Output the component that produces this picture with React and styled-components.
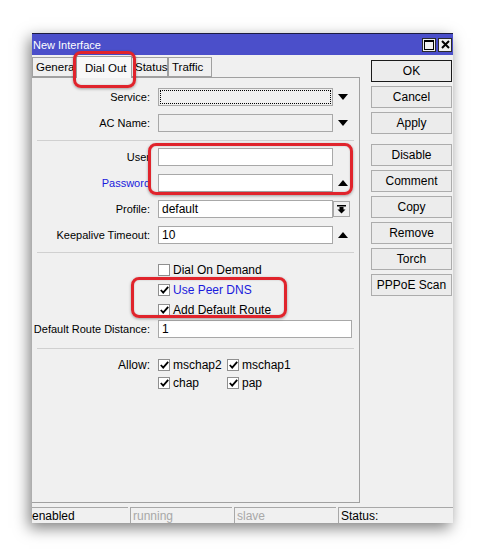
import React from "react";
import styled, { createGlobalStyle } from "styled-components";

const GlobalStyle = createGlobalStyle`
  html, body {
    margin: 0;
    padding: 0;
    background: #ffffff;
  }
  body {
    font-family: "Liberation Sans", Arial, sans-serif;
    font-size: 11px;
    color: #000;
  }
`;

const Page = styled.div`
  width: 485px;
  height: 556px;
  padding: 33px 0 0 32px;
  box-sizing: border-box;
`;

const Window = styled.div`
  position: relative;
  width: 421px;
  height: 490px;
  background: #f0f0f0;
  display: flex;
  flex-direction: column;
  box-shadow: -3px 5px 14px rgba(0, 0, 0, 0.5);
`;

const TitleBar = styled.div`
  height: 22px;
  box-sizing: border-box;
  background: #4b4fca;
  border-top: 1px solid #1c1c40;
  display: flex;
  align-items: center;
  padding: 0 1px 0 1px;
  color: #fff;
`;

const Title = styled.div`
  flex: 1;
  font-size: 11px;
`;

const TitleButton = styled.div`
  width: 14px;
  height: 14px;
  box-sizing: border-box;
  margin-left: 2px;
  border: 1px solid #2a2a2a;
  background: #f0f0f0;
  display: flex;
  align-items: center;
  justify-content: center;
`;

const Body = styled.div`
  flex: 1;
  display: flex;
`;

const LeftColumn = styled.div`
  width: 328px;
  display: flex;
  flex-direction: column;
`;

const TabStrip = styled.div`
  height: 23px;
  display: flex;
  align-items: flex-end;
  border-bottom: 1px solid #a0a0a0;
  box-sizing: border-box;
`;

const Tab = styled.div`
  position: relative;
  height: ${(p) => (p.$active ? "22px" : "20px")};
  margin: ${(p) => (p.$active ? "0 -1px -1px -1px" : "0")};
  padding: 0 ${(p) => (p.$active ? "8px" : "3px")};
  width: ${(p) => p.$w}px;
  box-sizing: border-box;
  border: 1px solid #a0a0a0;
  border-bottom: ${(p) => (p.$active ? "none" : "1px solid #a0a0a0")};
  background: ${(p) => (p.$active ? "#f8f8f8" : "#f0f0f0")};
  display: flex;
  align-items: center;
  white-space: nowrap;
  font-size: 11.5px;
  z-index: ${(p) => (p.$active ? 2 : 1)};
`;

const Panel = styled.div`
  position: relative;
  flex: 1;
  border-right: 1px solid #a0a0a0;
  border-bottom: 1px solid #a0a0a0;
  padding-top: 10px;
  box-sizing: border-box;
`;

const Row = styled.div`
  display: flex;
  align-items: center;
  height: ${(p) => p.$h || 18}px;
  margin-bottom: ${(p) => (p.$mb !== undefined ? p.$mb : 8)}px;
`;

const Label = styled.div`
  width: 118px;
  margin-right: 8px;
  text-align: right;
  white-space: nowrap;
  color: ${(p) => (p.$blue ? "#1a1adc" : "#000")};
`;

const Field = styled.div`
  width: ${(p) => p.$w || 175}px;
  height: 18px;
  box-sizing: border-box;
  border: 1px solid #a8a8a8;
  background: ${(p) => (p.$disabled ? "#f0f0f0" : "#ffffff")};
  padding: 0 3px;
  display: flex;
  align-items: center;
  font-size: 12px;
`;

const FocusRing = styled.div`
  flex: 1;
  height: 12px;
  margin: 0 -2px;
  border: 1px dotted #000;
`;

const Trail = styled.div`
  width: 20px;
  height: 18px;
  display: flex;
  align-items: center;
  justify-content: center;
`;

const SmallButton = styled.div`
  width: 17px;
  height: 16px;
  box-sizing: border-box;
  border: 1px solid #a8a8a8;
  background: #f0f0f0;
  display: flex;
  align-items: center;
  justify-content: center;
`;

const Separator = styled.div`
  margin: 0 5px 7px 5px;
  border-top: 1px solid #d0d0d0;
`;

const CheckRow = styled.label`
  display: flex;
  align-items: center;
  height: 20px;
  margin-left: 126px;
  color: ${(p) => (p.$blue ? "#1a1adc" : "#000")};
  font-size: 12px;
`;

const Box = styled.span`
  width: 12px;
  height: 12px;
  box-sizing: border-box;
  border: 1px solid #8f8f8f;
  background: #fff;
  margin-right: 3px;
  display: inline-flex;
  align-items: center;
  justify-content: center;
`;

const AllowGrid = styled.div`
  display: grid;
  grid-template-columns: 126px 69px auto;
  grid-auto-rows: 18px;
  align-items: center;
`;

const AllowLabel = styled.div`
  text-align: right;
  padding-right: 8px;
  font-size: 12px;
`;

const AllowItem = styled.div`
  display: flex;
  align-items: center;
  font-size: 12px;
`;

const ButtonColumn = styled.div`
  width: 81px;
  margin-left: 11px;
  padding-top: 5px;
  display: flex;
  flex-direction: column;
  gap: 4px;
`;

const Button = styled.div`
  height: 22px;
  box-sizing: border-box;
  border: 1px solid ${(p) => (p.$default ? "#1a1a1a" : "#acacac")};
  background: #ececec;
  display: flex;
  align-items: center;
  justify-content: center;
  font-size: 12px;
  margin-top: ${(p) => (p.$gapBefore ? "6px" : "0")};
`;

const StatusBar = styled.div`
  height: 20px;
  display: flex;
  padding-top: 4px;
  box-sizing: border-box;
  gap: 2px;
`;

const StatusCell = styled.div`
  width: ${(p) => (p.$w ? `${p.$w}px` : "auto")};
  flex: ${(p) => (p.$w ? "none" : 1)};
  border-top: 1px solid #a8a8a8;
  border-left: ${(p) => (p.$first ? "none" : "1px solid #a8a8a8")};
  color: ${(p) => (p.$muted ? "#a8a8a8" : "#000")};
  padding-left: ${(p) => (p.$first ? 0 : 2)}px;
  display: flex;
  align-items: center;
  font-size: 12px;
  overflow: hidden;
  white-space: nowrap;
`;

const Highlight = styled.div`
  position: absolute;
  left: ${(p) => p.$x}px;
  top: ${(p) => p.$y}px;
  width: ${(p) => p.$w}px;
  height: ${(p) => p.$h}px;
  box-sizing: border-box;
  border: 3px solid #e0242c;
  border-radius: 8px;
  box-shadow: 0 1px 3px rgba(0, 0, 0, 0.35), inset 0 0 2px rgba(0, 0, 0, 0.2);
  pointer-events: none;
  z-index: 5;
`;

const ArrowDown = () => (
  <svg width="10" height="6" viewBox="0 0 10 6">
    <path d="M0 0 H10 L5 6 Z" fill="#000" />
  </svg>
);

const ArrowUp = () => (
  <svg width="10" height="6" viewBox="0 0 10 6">
    <path d="M0 6 H10 L5 0 Z" fill="#000" />
  </svg>
);

const ArrowDownBar = () => (
  <svg width="9" height="9" viewBox="0 0 9 9">
    <rect x="0" y="0" width="9" height="1.5" fill="#000" />
    <path d="M2.5 2 H6.5 V4.5 H8.5 L4.5 8.5 L0.5 4.5 H2.5 Z" fill="#000" />
  </svg>
);

const Check = () => (
  <svg width="9" height="8" viewBox="0 0 9 8">
    <path d="M0.8 4 L3.2 6.6 L8.2 0.8" stroke="#000" strokeWidth="1.8" fill="none" />
  </svg>
);

const CheckBox = ({ checked }) => <Box>{checked && <Check />}</Box>;

const tabs = [
  { name: "General", w: 45 },
  { name: "Dial Out", w: 56, active: true },
  { name: "Status", w: 37 },
  { name: "Traffic", w: 44 },
];

const buttons = ["OK", "Cancel", "Apply", "Disable", "Comment", "Copy", "Remove", "Torch", "PPPoE Scan"];

export default function App() {
  return (
    <Page>
      <GlobalStyle />
      <Window>
        <TitleBar>
          <Title>New Interface</Title>
          <TitleButton>
            <svg width="10" height="10" viewBox="0 0 10 10">
              <rect x="0.5" y="0.5" width="9" height="9" fill="none" stroke="#000" />
              <rect x="0" y="0" width="10" height="2" fill="#000" />
            </svg>
          </TitleButton>
          <TitleButton>
            <svg width="9" height="9" viewBox="0 0 9 9">
              <path d="M1 1 L8 8 M8 1 L1 8" stroke="#000" strokeWidth="2" />
            </svg>
          </TitleButton>
        </TitleBar>

        <Body>
          <LeftColumn>
            <TabStrip>
              {tabs.map((t) => (
                <Tab key={t.name} $active={t.active} $w={t.w}>
                  {t.name}
                </Tab>
              ))}
            </TabStrip>

            <Panel>
              <Row>
                <Label>Service:</Label>
                <Field $disabled>
                  <FocusRing />
                </Field>
                <Trail>
                  <ArrowDown />
                </Trail>
              </Row>
              <Row>
                <Label>AC Name:</Label>
                <Field $disabled />
                <Trail>
                  <ArrowDown />
                </Trail>
              </Row>
              <Separator />
              <Row>
                <Label>User</Label>
                <Field />
              </Row>
              <Row>
                <Label $blue>Password</Label>
                <Field />
                <Trail>
                  <ArrowUp />
                </Trail>
              </Row>
              <Row>
                <Label>Profile:</Label>
                <Field>default</Field>
                <SmallButton>
                  <ArrowDownBar />
                </SmallButton>
              </Row>
              <Row>
                <Label>Keepalive Timeout:</Label>
                <Field>10</Field>
                <Trail>
                  <ArrowUp />
                </Trail>
              </Row>
              <Separator />
              <CheckRow>
                <CheckBox />
                Dial On Demand
              </CheckRow>
              <CheckRow $blue>
                <CheckBox checked />
                Use Peer DNS
              </CheckRow>
              <CheckRow>
                <CheckBox checked />
                Add Default Route
              </CheckRow>
              <Row $mb={10}>
                <Label>Default Route Distance:</Label>
                <Field $w={194}>1</Field>
              </Row>
              <Separator />
              <AllowGrid>
                <AllowLabel>Allow:</AllowLabel>
                <AllowItem>
                  <CheckBox checked />
                  mschap2
                </AllowItem>
                <AllowItem>
                  <CheckBox checked />
                  mschap1
                </AllowItem>
                <span />
                <AllowItem>
                  <CheckBox checked />
                  chap
                </AllowItem>
                <AllowItem>
                  <CheckBox checked />
                  pap
                </AllowItem>
              </AllowGrid>
            </Panel>
          </LeftColumn>

          <ButtonColumn>
            {buttons.map((b) => (
              <Button key={b} $default={b === "OK"} $gapBefore={b === "Disable"}>
                {b}
              </Button>
            ))}
          </ButtonColumn>
        </Body>

        <StatusBar>
          <StatusCell $w={96} $first>
            enabled
          </StatusCell>
          <StatusCell $w={99} $muted>
            running
          </StatusCell>
          <StatusCell $w={99} $muted>
            slave
          </StatusCell>
          <StatusCell>Status:</StatusCell>
        </StatusBar>

        <Highlight $x={41} $y={18} $w={63} $h={37} />
        <Highlight $x={116} $y={110} $w={205} $h={52} />
        <Highlight $x={99} $y={244} $w={156} $h={41} />
      </Window>
    </Page>
  );
}
